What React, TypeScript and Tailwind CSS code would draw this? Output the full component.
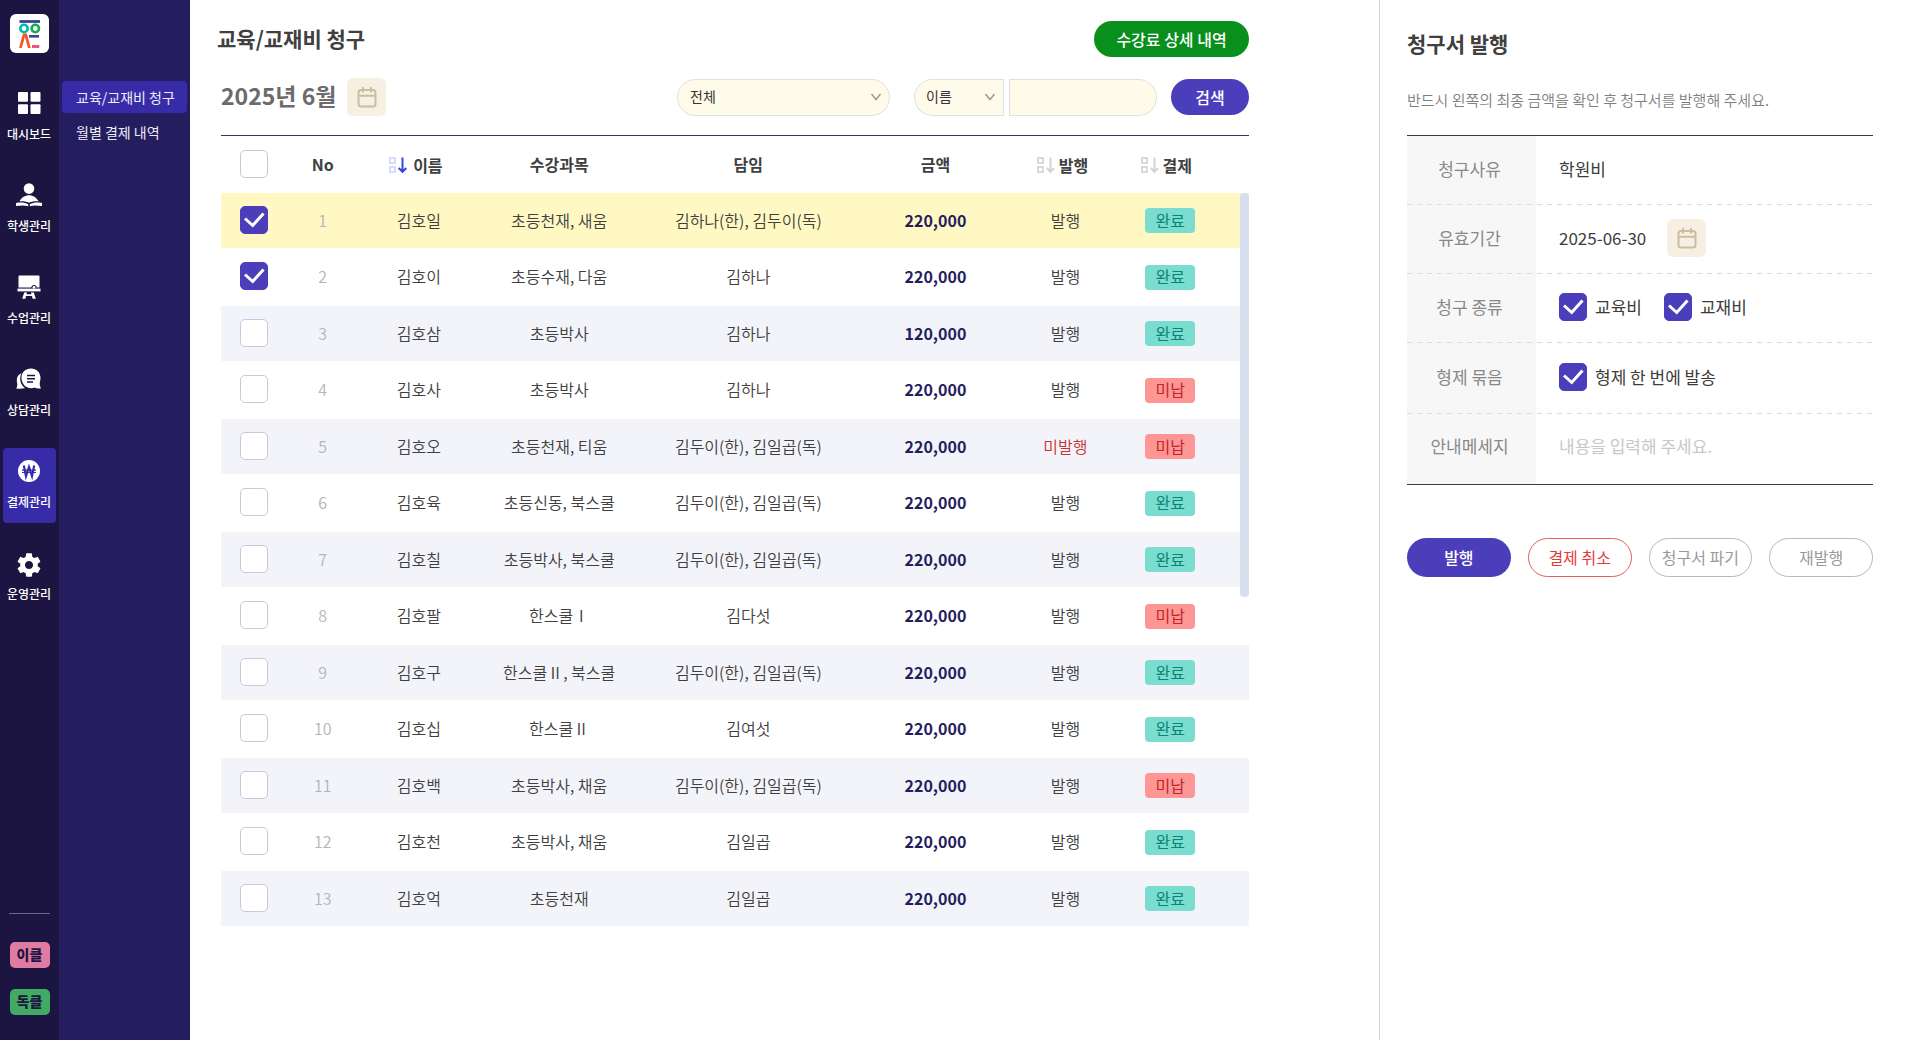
import React, { useId } from "react";

const FONT = "font-['Noto_Sans_CJK_KR','Noto_Sans',sans-serif]";

type Student = {
  no: number;
  name: string;
  subject: string;
  teacher: string;
  amount: string;
  issued: boolean;
  paid: boolean;
  checked?: boolean;
};

const students: Student[] = [
  { no: 1, name: "김호일", subject: "초등천재, 새움", teacher: "김하나(한), 김두이(독)", amount: "220,000", issued: true, paid: true, checked: true },
  { no: 2, name: "김호이", subject: "초등수재, 다움", teacher: "김하나", amount: "220,000", issued: true, paid: true, checked: true },
  { no: 3, name: "김호삼", subject: "초등박사", teacher: "김하나", amount: "120,000", issued: true, paid: true },
  { no: 4, name: "김호사", subject: "초등박사", teacher: "김하나", amount: "220,000", issued: true, paid: false },
  { no: 5, name: "김호오", subject: "초등천재, 티움", teacher: "김두이(한), 김일곱(독)", amount: "220,000", issued: false, paid: false },
  { no: 6, name: "김호육", subject: "초등신동, 북스쿨", teacher: "김두이(한), 김일곱(독)", amount: "220,000", issued: true, paid: true },
  { no: 7, name: "김호칠", subject: "초등박사, 북스쿨", teacher: "김두이(한), 김일곱(독)", amount: "220,000", issued: true, paid: true },
  { no: 8, name: "김호팔", subject: "한스쿨Ⅰ", teacher: "김다섯", amount: "220,000", issued: true, paid: false },
  { no: 9, name: "김호구", subject: "한스쿨Ⅱ, 북스쿨", teacher: "김두이(한), 김일곱(독)", amount: "220,000", issued: true, paid: true },
  { no: 10, name: "김호십", subject: "한스쿨Ⅱ", teacher: "김여섯", amount: "220,000", issued: true, paid: true },
  { no: 11, name: "김호백", subject: "초등박사, 채움", teacher: "김두이(한), 김일곱(독)", amount: "220,000", issued: true, paid: false },
  { no: 12, name: "김호천", subject: "초등박사, 채움", teacher: "김일곱", amount: "220,000", issued: true, paid: true },
  { no: 13, name: "김호억", subject: "초등천재", teacher: "김일곱", amount: "220,000", issued: true, paid: true },
];

const ACTIVE_NO = 1;

function Logo() {
  return (
    <svg viewBox="0 0 39 39" className="size-[39px]" aria-hidden="true">
      <rect width="39" height="39" rx="6" fill="#fff" />
      <path d="M9.500 7.500h20.500" stroke="#3f3f9e" strokeWidth="2.800" />
      <circle cx="14" cy="14.500" r="3.700" fill="none" stroke="#00b9b4" strokeWidth="2.600" />
      <circle cx="25.300" cy="14.500" r="3.700" fill="none" stroke="#11ad4b" strokeWidth="2.600" />
      <path d="M19 22.300h10" stroke="#3f3f9e" strokeWidth="2.600" />
      <path d="M10.400 34 14 21h1.800L19.400 34" fill="none" stroke="#f15a22" strokeWidth="2.800" />
      <path d="M22 32.500h7.300" stroke="#ee4a7b" strokeWidth="2.800" />
    </svg>
  );
}

function DashboardIcon() {
  return (
    <svg viewBox="0 0 24 24" className="size-6" fill="#fff" aria-hidden="true">
      <rect x="1" y="1" width="10" height="9.800" rx="1" />
      <rect x="13.500" y="1" width="10" height="9.800" rx="1" />
      <rect x="1" y="13.200" width="10" height="9.800" rx="1" />
      <rect x="13.500" y="13.200" width="10" height="9.800" rx="1" />
    </svg>
  );
}

function StudentIcon() {
  return (
    <svg viewBox="0 0 26 24" className="h-6 w-[26px]" fill="#fff" aria-hidden="true">
      <circle cx="13" cy="5.600" r="5.300" />
      <path d="M3.500 18.300C5.500 14.600 9 12.300 13 12.300s7.500 2.300 9.500 6c-3.500-.4-6.800 0-9.500 1.400-2.700-1.400-6-1.800-9.500-1.400Z" />
      <path d="M0 20c4.700-.9 9-.5 12.200 1.300v2c-3.500-1-7.500-.8-12.200-.2Z" />
      <path d="M26 20c-4.700-.9-9-.5-12.200 1.300v2c3.500-1 7.500-.8 12.200-.2Z" />
    </svg>
  );
}

function ClassIcon() {
  return (
    <svg viewBox="0 0 24 24" className="size-6" fill="#fff" aria-hidden="true">
      <path d="M2.500.5h19a1 1 0 0 1 1 1v11h-2.700c-.3-1.500-1.300-2.400-2.800-2.400s-2.500.9-2.800 2.400H1.500v-11a1 1 0 0 1 1-1Z" />
      <circle cx="17" cy="12.300" r="1.400" />
      <rect x=".5" y="13.600" width="23" height="2.800" />
      <path d="M7.200 17.500H10l-.4 1.700h4.800l-.4-1.700h2.800l2 6.200h-3.200l-.6-2.600H9l-.6 2.600H5.200Z" />
    </svg>
  );
}

function TalkIcon() {
  return (
    <svg viewBox="0 0 26 24" className="h-6 w-[26px]" aria-hidden="true">
      <path d="M5.500 6C2.200 7.600.8 10.300.8 13.200c0 2.200.5 3.200.5 4.600 0 1.500-.5 2.500-1 3.700 2.800.3 5.500.2 8.700-.2C5.400 18.500 4 14.500 4.200 11c.1-1.800.5-3.500 1.300-5Z" fill="#fff" />
      <path d="M15 1.500c5.400 0 9.500 4.200 9.500 9.300 0 2.700-.8 4.300-.8 6.200 0 2 .9 3.200 1.200 4.500-2.500.3-5-.2-6-.9-1.200.4-2.500.6-3.900.6-5.400 0-9.500-4.600-9.500-10.400S9.600 1.500 15 1.500Z" fill="#fff" />
      <path d="M11 8.500h8M11 11.700h8M11 14.900h6" stroke="#1c1541" strokeWidth="1.500" />
    </svg>
  );
}

function WonIcon() {
  return (
    <svg viewBox="0 0 24 24" className="size-6" aria-hidden="true">
      <circle cx="12" cy="12" r="11" fill="#fff" />
      <path d="M6.800 6.500 9 17.200 12 8l3 9.200L17.200 6.500" fill="none" stroke="#382ba8" strokeWidth="2.200" />
      <path d="M5 11.200h14M5 13.500h14" stroke="#382ba8" strokeWidth="1.200" />
    </svg>
  );
}

function GearIcon() {
  return (
    <svg viewBox="0 0 24 24" className="size-7" fill="#fff" aria-hidden="true">
      <path d="M19.430 12.980c.04-.32.07-.64.07-.98s-.03-.66-.07-.98l2.110-1.650c.19-.15.24-.42.12-.64l-2-3.460c-.12-.22-.39-.3-.61-.22l-2.490 1c-.52-.4-1.080-.73-1.690-.98l-.38-2.650C14.460 2.180 14.250 2 14 2h-4c-.25 0-.46.18-.49.42l-.38 2.650c-.61.25-1.170.59-1.690.98l-2.490-1c-.23-.09-.49 0-.61.22l-2 3.460c-.13.22-.07.49.12.64l2.110 1.650c-.04.32-.07.65-.07.98s.03.66.07.98l-2.110 1.650c-.19.15-.24.42-.12.64l2 3.460c.12.22.39.3.61.22l2.490-1c.52.4 1.080.73 1.690.98l.38 2.650c.03.24.24.42.49.42h4c.25 0 .46-.18.49-.42l.38-2.650c.61-.25 1.170-.59 1.690-.98l2.490 1c.23.09.49 0 .61-.22l2-3.460c.12-.22.07-.49-.12-.64l-2.110-1.650zM12 15.500c-1.930 0-3.500-1.570-3.500-3.500s1.570-3.500 3.500-3.500 3.500 1.570 3.500 3.500-1.570 3.500-3.500 3.500z" />
    </svg>
  );
}

function CalendarButton({ label }: { label: string }) {
  return (
    <button type="button" aria-label={label} className="grid h-[38px] w-[39px] shrink-0 place-items-center rounded-md bg-[#f6efe2]">
      <svg viewBox="0 0 20 22" className="h-[22px] w-5" fill="none" stroke="#cbbd9f" strokeWidth="2" aria-hidden="true">
        <rect x="1.500" y="4" width="17" height="16.500" rx="2.500" />
        <path d="M1.500 9.700h17M6 1v5.500M14 1v5.500" />
      </svg>
    </button>
  );
}

function SortIcon({ active = false }: { active?: boolean }) {
  return (
    <svg viewBox="0 0 18 18" className="size-[18px]" fill="none" strokeWidth="2" aria-hidden="true">
      <g stroke={active ? "#d5dcff" : "#d9d9d9"}>
        <rect x="1" y="2" width="5" height="5" />
        <rect x="1" y="11" width="5" height="5" />
      </g>
      <path d="M13.500 1.500v14M9.700 12l3.800 3.800 3.800-3.800" stroke={active ? "#3d45d8" : "#d3d3d3"} />
    </svg>
  );
}

function Chevron() {
  return (
    <svg viewBox="0 0 12 8" className="pointer-events-none absolute top-1/2 right-2 h-2 w-3 -translate-y-1/2" fill="none" stroke="#999" strokeWidth="1.500" aria-hidden="true">
      <path d="m1.500 1 4.500 5.500L10.500 1" />
    </svg>
  );
}

function Checkbox({ id, checked = false, label }: { id?: string; checked?: boolean; label?: string }) {
  return (
    <span className="inline-grid size-7 shrink-0 align-middle">
      <input
        id={id}
        type="checkbox"
        defaultChecked={checked}
        aria-label={label}
        className="peer col-start-1 row-start-1 size-7 appearance-none rounded-[5px] border border-[#c5cadd] bg-white checked:border-[#4b3ebb] checked:bg-[#4b3ebb]"
      />
      <svg viewBox="0 0 28 28" className="pointer-events-none invisible col-start-1 row-start-1 size-7 peer-checked:visible" fill="none" stroke="#fff" strokeWidth="3" aria-hidden="true">
        <path d="m5 12.500 7.700 7L23.500 7.500" />
      </svg>
    </span>
  );
}

function LabeledCheckbox({ text }: { text: string }) {
  const id = useId();
  return (
    <span className="flex items-center gap-2">
      <Checkbox id={id} checked />
      <label htmlFor={id}>{text}</label>
    </span>
  );
}

const navItems = [
  { label: "대시보드", icon: <DashboardIcon /> },
  { label: "학생관리", icon: <StudentIcon /> },
  { label: "수업관리", icon: <ClassIcon /> },
  { label: "상담관리", icon: <TalkIcon /> },
  { label: "결제관리", icon: <WonIcon />, active: true },
  { label: "운영관리", icon: <GearIcon /> },
];

function Sidebar() {
  return (
    <nav className="flex w-[59px] shrink-0 flex-col items-center bg-[#1c1541] pt-3.5 pb-[25px]">
      <a href="#home" aria-label="홈">
        <Logo />
      </a>
      <ul className="mt-[27px] flex flex-col gap-[17px]">
        {navItems.map((item) => (
          <li key={item.label}>
            <a
              href="#menu"
              className={`flex h-[75px] w-[53px] flex-col items-center justify-center gap-[11px] rounded pr-px pb-[3px] text-xs font-medium text-white ${item.active ? "bg-[#382ba8]" : ""}`}
            >
              <span className="grid h-6 place-items-center">{item.icon}</span>
              {item.label}
            </a>
          </li>
        ))}
      </ul>
      <div className="mt-auto flex flex-col items-center">
        <hr className="mb-7 w-[41px] border-[#6c6594]" />
        <button type="button" className="mb-[21px] h-[26px] w-10 rounded-[5px] bg-[#e07ba4] pb-0.5 text-sm font-black text-[#1c1541]">이클</button>
        <button type="button" className="h-[26px] w-10 rounded-[5px] bg-[#41ab63] pb-0.5 text-sm font-black text-[#1c1541]">독클</button>
      </div>
    </nav>
  );
}

function SubMenu() {
  return (
    <nav className="flex w-[131px] shrink-0 flex-col gap-[3px] bg-[#241d5e] px-[3px] pt-[81px] text-sm text-[#eeedf5]">
      <a href="#billing" className="flex h-8 items-center rounded bg-[#382ba8] pl-3.5 whitespace-nowrap">교육/교재비 청구</a>
      <a href="#monthly" className="flex h-8 items-center pl-3.5 whitespace-nowrap">월별 결제 내역</a>
    </nav>
  );
}

function StudentTable() {
  return (
    <div className="relative mt-[19px] border-t border-[#3d355f]">
      <table className="w-full table-fixed text-center text-base text-[#404040] [&_td]:pb-0.5 [&_th]:pb-0.5">
        <colgroup>
          <col className="w-[6.4%]" />
          <col className="w-[7%]" />
          <col className="w-[11.7%]" />
          <col className="w-[15.6%]" />
          <col className="w-[21.2%]" />
          <col className="w-[15.2%]" />
          <col className="w-[10.1%]" />
          <col className="w-[10.3%]" />
          <col className="w-[2.5%]" />
        </colgroup>
        <thead>
          <tr className="h-[57px] text-base text-[#404040] [&>th]:font-bold">
            <th><Checkbox label="전체 선택" /></th>
            <th>No</th>
            <th>
              <button type="button" className="inline-flex items-center gap-1.5 pr-1.5 align-middle"><SortIcon active />이름</button>
            </th>
            <th>수강과목</th>
            <th>담임</th>
            <th>금액</th>
            <th>
              <button type="button" className="inline-flex items-center gap-1 pr-1.5 align-middle"><SortIcon />발행</button>
            </th>
            <th>
              <button type="button" className="inline-flex items-center gap-1 pr-2 align-middle"><SortIcon />결제</button>
            </th>
            <th aria-hidden="true" />
          </tr>
        </thead>
        <tbody className="font-[350]">
          {students.map((s) => (
            <tr key={s.no} className={`h-[58px] odd:h-[55px] ${s.no === ACTIVE_NO ? "bg-[#fff8c3]" : "odd:bg-[#f3f4f9]"}`}>
              <td><Checkbox checked={s.checked} label={`${s.name} 선택`} /></td>
              <td className="text-[#b5b5b5]">{s.no}</td>
              <td>{s.name}</td>
              <td>{s.subject}</td>
              <td>{s.teacher}</td>
              <td className="font-bold text-[#241d5e]">{s.amount}</td>
              <td className={s.issued ? "" : "text-[#c73333]"}>{s.issued ? "발행" : "미발행"}</td>
              <td>
                <span
                  className={`inline-flex h-[25px] w-[50px] items-center justify-center rounded pb-0.5 align-middle font-normal ${s.paid ? "bg-[#7addd0] text-[#0b8573]" : "bg-[#ff9696] text-[#bf2626]"}`}
                >
                  {s.paid ? "완료" : "미납"}
                </span>
              </td>
              <td />
            </tr>
          ))}
        </tbody>
      </table>
      <div className="absolute top-[57px] right-0 h-[404px] w-[9px] rounded bg-[#d6dfee]" />
    </div>
  );
}

function Main() {
  return (
    <main className="min-w-0 flex-1 pt-[21px] pr-[130px] pl-[31px]">
      <div className="flex h-9 items-center justify-between">
        <h1 className="-ml-1 text-[21px] font-bold text-[#404040]">교육/교재비 청구</h1>
        <button type="button" className="h-9 w-[155px] rounded-full bg-[#09901c] text-base font-medium text-white">수강료 상세 내역</button>
      </div>
      <div className="mt-[21px] flex h-[38px] items-center">
        <p className="pb-1 text-[23px] font-bold whitespace-nowrap text-[#6b6b6b]">2025년 6월</p>
        <span className="ml-[11px] flex"><CalendarButton label="월 선택" /></span>
        <div className="relative ml-auto w-[213px]">
          <select aria-label="분류" className="h-[37px] w-full appearance-none rounded-full border border-[#e0e0e0] bg-[#fffbea] pb-0.5 pl-3 text-sm text-[#333]">
            <option>전체</option>
          </select>
          <Chevron />
        </div>
        <div className="relative ml-6 w-[90px]">
          <select aria-label="검색 기준" className="h-[37px] w-full appearance-none rounded-l-full rounded-r border border-[#e0e0e0] bg-[#fffbea] pb-0.5 pl-[11px] text-sm text-[#333]">
            <option>이름</option>
          </select>
          <Chevron />
        </div>
        <input type="text" aria-label="검색어" className="ml-[5px] h-[37px] w-[148px] rounded-l rounded-r-full border border-[#e0e0e0] bg-[#fffbea] px-3 text-sm" />
        <button type="button" className="ml-3.5 h-9 w-[78px] rounded-full bg-[#4b3ebb] text-base font-medium text-white">검색</button>
      </div>
      <StudentTable />
    </main>
  );
}

function FormRow({ title, htmlFor, height = "h-[69px] pb-[3px]", last, children }: { title: string; htmlFor?: string; height?: string; last?: boolean; children: React.ReactNode }) {
  return (
    <div
      className={`flex items-center ${height} ${last ? "" : "bg-[repeating-linear-gradient(90deg,#dcdcdc_0_5px,transparent_5px_10px)] bg-[length:100%_1px] bg-bottom bg-no-repeat"}`}
    >
      <label htmlFor={htmlFor} className="w-[129px] shrink-0 pr-1 text-center text-[#888]">{title}</label>
      <div className="flex flex-1 items-center pl-[23px] text-[#3c3c3c]">{children}</div>
    </div>
  );
}

function InvoicePanel() {
  return (
    <aside className="w-[541px] shrink-0 border-l border-[#d3d3d3] pt-[25px] pr-[47px] pl-[27px]">
      <h2 className="text-[21px] leading-9 font-bold text-[#404040]">청구서 발행</h2>
      <p className="mt-[27px] text-[15px] leading-6 font-[350] text-[#7f7f7f]">반드시 왼쪽의 최종 금액을 확인 후 청구서를 발행해 주세요.</p>
      <div className="mt-[23px] border-y border-[#3c3c3c] bg-[linear-gradient(90deg,#f7f7f7_129px,transparent_129px)] text-[17px]">
        <FormRow title="청구사유">학원비</FormRow>
        <FormRow title="유효기간">
          <span className="mr-[21px]">2025-06-30</span>
          <CalendarButton label="유효기간 선택" />
        </FormRow>
        <FormRow title="청구 종류">
          <div className="flex gap-[22px]">
            <LabeledCheckbox text="교육비" />
            <LabeledCheckbox text="교재비" />
          </div>
        </FormRow>
        <FormRow title="형제 묶음" height="h-[71px] pb-[3px]">
          <LabeledCheckbox text="형제 한 번에 발송" />
        </FormRow>
        <FormRow title="안내메세지" htmlFor="message" height="h-[70px] pb-[7px]" last>
          <input id="message" type="text" placeholder="내용을 입력해 주세요." className="w-full bg-transparent outline-none placeholder:text-[#c8c8c8]" />
        </FormRow>
      </div>
      <div className="mt-[53px] grid grid-cols-4 gap-[17px] text-base whitespace-nowrap">
        <button type="button" className="h-[39px] rounded-full bg-[#4b3ebb] pb-0.5 font-medium text-white">발행</button>
        <button type="button" className="h-[39px] rounded-full border border-[#e85c5c] pb-0.5 text-[#e33b3b]">결제 취소</button>
        <button type="button" className="h-[39px] rounded-full border border-[#b8b8b8] pb-0.5 text-[#9a9a9a]">청구서 파기</button>
        <button type="button" className="h-[39px] rounded-full border border-[#b8b8b8] pb-0.5 text-[#9a9a9a]">재발행</button>
      </div>
    </aside>
  );
}

export default function App() {
  return (
    <div className={`flex min-h-screen bg-white ${FONT}`}>
      <Sidebar />
      <SubMenu />
      <Main />
      <InvoicePanel />
    </div>
  );
}
